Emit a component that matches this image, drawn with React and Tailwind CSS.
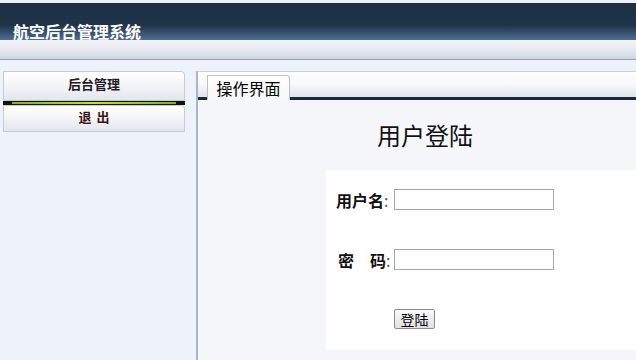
const cjk = { fontFamily: '"Noto Sans CJK SC", "Liberation Sans", sans-serif' };

function SideButton({ label, className, tall }) {
  return (
    <div
      className={`flex items-center justify-center rounded-tr-[4px] border border-[#c3cad6] bg-gradient-to-b from-[#ffffff] via-[#f3f4f7] to-[#e2e6ee] text-[13px] font-bold ${tall ? "h-[30px] pb-[5px]" : "h-[27px] pb-[3px]"} ${className}`}
    >
      {label}
    </div>
  );
}

export default function App() {
  return (
    <div className="flex h-[360px] w-[636px] flex-col overflow-hidden bg-[#eef2fa]" style={cjk}>
      {/* header */}
      <div className="pt-[3px]">
        <div className="h-[37px] bg-gradient-to-b from-[#1c3044] via-[#1f3449] via-60% to-[#4d6f93] pl-[13px] pt-[16px]">
          <span className="text-[16px] font-bold leading-[18px] text-white">航空后台管理系统</span>
        </div>
        <div className="h-[20px] border-b border-[#98a2ad] bg-gradient-to-b from-[#f3f4f7] via-[#e6e9ef] to-[#cfd6e1]" />
      </div>

      <div className="flex flex-1 pt-[11px]">
        {/* sidebar */}
        <div className="w-[196px] pl-[3px]">
          <div className="w-[182px]">
            <SideButton label="后台管理" tall className="text-[#231a22]" />
            <div className="flex h-[4px] items-center bg-[#0e1410] px-[9px]">
              <div className="h-[2px] w-full bg-gradient-to-r from-[#8fb000] via-[#c8e600] to-[#8fb000]" />
            </div>
            <SideButton label="退出" className="tracking-[5px] pl-[5px] text-[#3a1414]" />
          </div>
        </div>

        {/* main panel */}
        <div className="flex flex-1 flex-col border-l-2 border-t border-l-[#a9b6c6] border-t-[#c9d1dc] bg-[#f5f6fa]">
          <div className="relative h-[28px] border-b-[3px] border-[#17293a] bg-gradient-to-b from-[#fdfefe] via-[#f7f8fa] to-[#dfe4ea]">
            <div className="absolute left-[9px] top-[3px] flex h-[25px] w-[83px] items-center justify-center rounded-tr-[4px] border border-b-0 border-[#b9c1cc] bg-gradient-to-b from-[#ffffff] to-[#f6f7f9] text-[16px] text-black">
              操作界面
            </div>
          </div>

          <div className="pl-[179px] pt-[19px] text-[24px] leading-[32px] text-[#111]">用户登陆</div>

          <div className="ml-[128px] mt-[19px] flex flex-col gap-[39px] bg-white pb-[21px] pl-[10px] pt-[19px]">
            <div className="flex h-[21px] items-center">
              <span className="w-[58px] text-[16px] font-bold text-[#111]">用户名<span className="font-normal text-[#555]">:</span></span>
              <div className="h-[21px] w-[160px] border border-[#a6a6a6] bg-white" />
            </div>
            <div className="flex h-[21px] items-center">
              <span className="w-[58px] pl-[2px] text-[16px] font-bold text-[#111]">密　码<span className="font-normal text-[#555]">:</span></span>
              <div className="h-[21px] w-[160px] border border-[#a6a6a6] bg-white" />
            </div>
            <div className="flex h-[20px] pl-[58px]">
              <button className="flex h-[20px] w-[41px] items-center justify-center rounded-[2px] border border-[#8a8a8a] bg-gradient-to-b from-[#fafafa] to-[#e1e1e1] text-[14px] leading-none text-black">
                登陆
              </button>
            </div>
          </div>
        </div>
      </div>
    </div>
  );
}
